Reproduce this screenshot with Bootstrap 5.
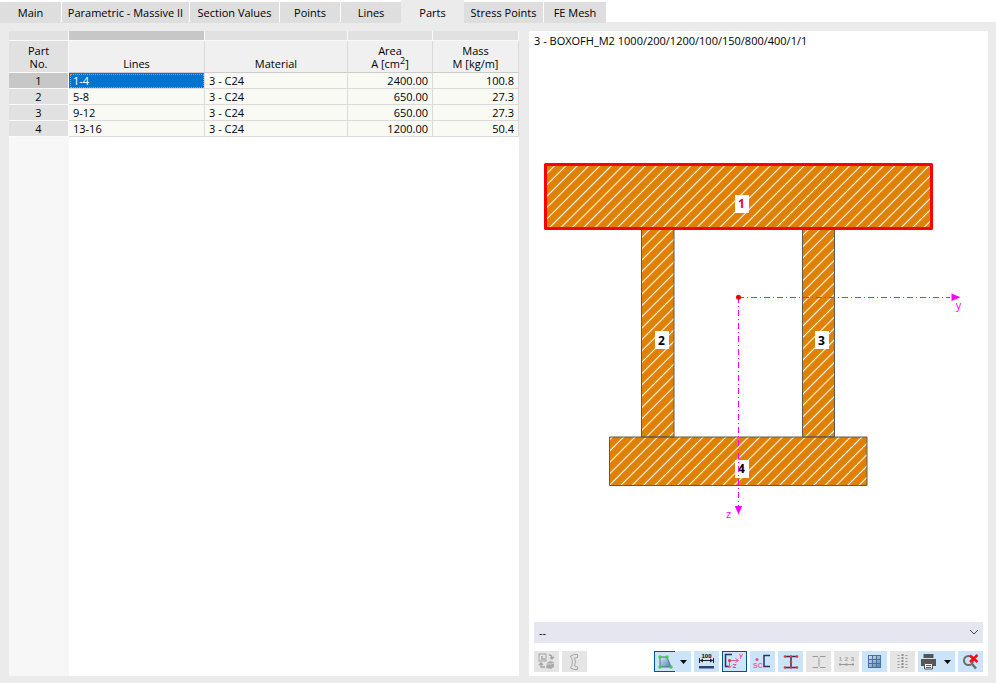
<!DOCTYPE html>
<html lang="en">
<head>
<meta charset="utf-8">
<meta name="viewport" content="width=device-width, initial-scale=1">
<title>Section - Parts</title>
<link href="https://cdn.jsdelivr.net/npm/bootstrap@5.3.0/dist/css/bootstrap.min.css" rel="stylesheet">
<style>
body{font-family:"Open Sans","Noto Sans",sans-serif;font-size:11px;line-height:13px;color:#000;background:#ebebeb}
.tab-strip{background:linear-gradient(#fff 22px,#ebebeb 22px);gap:1px;height:31px}
.tab-btn{border:0;background:#dedede;color:#000;height:21px;margin-top:2px;padding:0;font-size:11px;line-height:21px;white-space:nowrap}
.tab-btn.active{background:#ebebeb;height:23px;margin:0 -1px;padding-top:2px}
.tab-main{width:61px}.tab-param{width:127px}.tab-values{width:89px}.tab-short{width:60px}.tab-parts{width:63px}.tab-stress{width:79px}.tab-mesh{width:62px}
.work-area{padding:0 8px 7px 9px;gap:10px}
.parts-pane{flex:1 1 510px;min-width:0;background:linear-gradient(90deg,#f7f7f7 60px,#fff 60px)}
.draw-pane{flex:1 1 459px;min-width:0;padding:3px 5px 4px}
.parts-grid{width:100%;table-layout:fixed;border-collapse:separate;border-spacing:0}
.parts-grid td,.parts-grid th{font-weight:400;border:0 solid #dadada;border-width:0 1px 1px 0;overflow:hidden;white-space:nowrap}
.parts-grid .strip th{height:10px;padding:0;background:#e1e1e1;border-color:#fafafa}
.parts-grid .strip .on{background:#c7c7c7}
.parts-grid .heads th{height:32px;padding:0 4px 2px;vertical-align:bottom;text-align:center;background:#f0f0f0;border-bottom-color:#ccc}
.parts-grid tbody td{height:16px;padding:0 4px;line-height:15px;background:#fafaf5}
.parts-grid tbody th{height:16px;padding:0;line-height:15px;text-align:center}
.parts-grid tr .rowhead{background:#e1e1e1;border-color:#fafafa}
.parts-grid tr .rowhead.on{background:#c7c7c7}
.parts-grid tbody td.picked{background:#0073d0;color:#fff;outline:1px dotted #ff8a28;outline-offset:-2px}
.parts-grid sup{font-size:9px;line-height:0;top:-4px}
.view-select{appearance:none;border:0;border-radius:0;width:100%;height:21px;padding:0 5px;font-size:11px;color:#000;background:#e6e6f1}
.pick-wrap{position:relative}
.pick-wrap svg{position:absolute;right:4px;top:6px;pointer-events:none}
.tools{gap:3px;margin-top:8px}
.tool{border:0;padding:0;width:25px;height:21px;background:#cce4f7;display:flex;align-items:center;justify-content:center}
.tool.off{background:#e5e5e5}
.tool.down{box-shadow:inset 0 0 0 1px #00529b}
.tool-main{width:21px;box-shadow:inset 1px 1px #00529b,inset 0 -1px #00529b}
.tool-main.plain{box-shadow:none}
.tool-arrow{width:16px}
.tool svg{display:block}
</style>
</head>
<body>
<div class="d-flex flex-column min-vh-100">
  <nav class="tab-strip d-flex align-items-start" role="tablist" aria-label="Section">
    <button class="tab-btn tab-main" role="tab">Main</button>
    <button class="tab-btn tab-param" role="tab">Parametric - Massive II</button>
    <button class="tab-btn tab-values" role="tab">Section Values</button>
    <button class="tab-btn tab-short" role="tab">Points</button>
    <button class="tab-btn tab-short" role="tab">Lines</button>
    <button class="tab-btn tab-parts active" role="tab" aria-selected="true">Parts</button>
    <button class="tab-btn tab-stress" role="tab">Stress Points</button>
    <button class="tab-btn tab-mesh" role="tab">FE Mesh</button>
  </nav>
  <main class="work-area d-flex flex-grow-1">
    <section class="parts-pane">
      <table class="parts-grid">
        <colgroup><col style="width:60px"><col style="width:136px"><col style="width:143px"><col style="width:85px"><col style="width:86px"></colgroup>
        <thead>
          <tr class="strip"><th class="rowhead"></th><th class="on"></th><th></th><th></th><th></th></tr>
          <tr class="heads"><th class="rowhead" scope="col">Part<br>No.</th><th scope="col">Lines</th><th scope="col">Material</th><th scope="col">Area<br>A [cm<sup>2</sup>]</th><th scope="col">Mass<br>M [kg/m]</th></tr>
        </thead>
        <tbody>
          <tr><th class="rowhead on" scope="row">1</th><td class="picked">1-4</td><td>3 - C24</td><td class="text-end">2400.00</td><td class="text-end">100.8</td></tr>
          <tr><th class="rowhead" scope="row">2</th><td>5-8</td><td>3 - C24</td><td class="text-end">650.00</td><td class="text-end">27.3</td></tr>
          <tr><th class="rowhead" scope="row">3</th><td>9-12</td><td>3 - C24</td><td class="text-end">650.00</td><td class="text-end">27.3</td></tr>
          <tr><th class="rowhead" scope="row">4</th><td>13-16</td><td>3 - C24</td><td class="text-end">1200.00</td><td class="text-end">50.4</td></tr>
        </tbody>
      </table>
    </section>
    <section class="draw-pane bg-white d-flex flex-column">
      <div>3 - BOXOFH_M2 1000/200/1200/100/150/800/400/1/1</div>
      <div class="flex-grow-1">
        <svg class="d-block w-100" viewBox="534 47 449 570" role="img" aria-label="Cross-section with four parts">
          <defs>
            <pattern id="hatch" width="8.022" height="8.022" patternUnits="userSpaceOnUse" patternTransform="rotate(45)">
              <rect width="9" height="9" fill="#e08000"/>
              <path d="M4 0V9" stroke="#fff" stroke-width="1.1"/>
            </pattern>
          </defs>
          <g fill="url(#hatch)" stroke="#5a5a55">
            <path d="M641.5 229.5h32.500v207.500h-32.500zM802.500 229.500h32v207.500h-32zM609.500 437h257.500v48.500h-257.500z"/>
            <rect x="545.500" y="164.500" width="386" height="64" stroke="#f00" stroke-width="3" stroke-linejoin="round"/>
          </g>
          <g fill="#fff"><path d="M735 195h14v18h-14zM655 331h14v18h-14zM815 331h14v18h-14zM735 460h14v18h-14z"/></g>
          <g font-size="12" font-weight="700" text-anchor="middle">
            <text x="741.500" y="208" fill="#f00028">1</text>
            <text x="661.500" y="345">2</text>
            <text x="821.500" y="345">3</text>
            <text x="741.500" y="473">4</text>
          </g>
          <g fill="none" stroke="#f0f" stroke-dasharray="6 3 1 3">
            <path d="M738 297.500H950"/><path d="M738.500 297V506"/>
          </g>
          <g fill="#f0f">
            <path d="M951.500 293.500V301L960.500 297.300zM734.800 506h7.400L738.500 514.500z"/>
            <text x="958.500" y="309" font-size="11" text-anchor="middle">y</text>
            <text x="728.500" y="518" font-size="11" text-anchor="middle">z</text>
          </g>
          <circle cx="738.500" cy="297.300" r="2.500" fill="#f00000"/>
        </svg>
      </div>
      <div class="pick-wrap">
        <select class="view-select d-block" aria-label="View"><option>--</option></select>
        <svg width="10" height="8" fill="none" stroke="#444"><path d="M1 2l4 4 4-4"/></svg>
      </div>
      <div class="tools d-flex">
        <button class="tool off" aria-label="Swap view">
          <svg width="17" height="17" fill="none" stroke="#a3a3a3"><rect x="1" y="1" width="7" height="7"/><path d="M3 3h2v2h2v2H3z" fill="#b5b5b5" stroke="none"/><path d="M11 2q3 0 3 3M12 4.500l2 1.500 2-2M3 10v4h4M1 12l2-2 2 2" stroke-width="1.300"/><path d="M9 10l3-2 4 1v5l-3 2-5-1z" fill="#ababab" stroke="none"/><path d="M9 11h4l3-1" stroke="#d5d5d5"/></svg></button>
        <button class="tool off me-auto" aria-label="Channel">
          <svg width="12" height="18" fill="none" stroke="#a8a8a8"><path d="M8.500 1.500H5L1.500 3q4 6 0 12L5 16.500h4M8.500 1.500v3l-3 .5q2 4 0 8l3 1v3"/></svg></button>
        <div class="d-flex">
          <button class="tool tool-main" aria-label="Display shape">
            <svg width="16" height="14"><defs><linearGradient id="blue" x2="1" y2="1"><stop stop-color="#dceaf5"/><stop offset="1" stop-color="#4f7caa"/></linearGradient></defs><path d="M3 2h7l4 10H3z" fill="url(#blue)" stroke="#4b6e94"/><g fill="#3fd23f"><circle cx="3" cy="2" r="1.700"/><circle cx="10" cy="2" r="1.700"/><circle cx="3" cy="12" r="1.700"/><circle cx="14" cy="12" r="1.700"/></g></svg></button>
          <button class="tool tool-arrow" aria-label="Shape options"><svg width="7" height="4"><path d="M0 0h7L3.500 4z"/></svg></button>
        </div>
        <button class="tool" aria-label="Dimensions">
          <svg width="17" height="17"><text x="8.500" y="5" font-size="6" font-weight="700" font-family="Liberation Sans,sans-serif" text-anchor="middle">100</text><path d="M1.500 5v5M15.500 5v5M2 7.500h13" stroke="#222"/><path d="M2 7.500l3-2v4zM15 7.500l-3-2v4z" fill="#222"/><path d="M1 13h15v2.500H1z" fill="#33416f"/></svg></button>
        <button class="tool down" aria-label="Principal axes">
          <svg width="21" height="17" fill="none"><path d="M8 1.500H1.500v12H6" stroke="#2d2d63" stroke-width="1.500"/><path d="M5 7.500h9M5.500 7v8" stroke="#e8559a"/><circle cx="5.500" cy="7.500" r="1.500" fill="#e33"/><path d="M11.500 5.500l3 2-3 2M3.500 12.500l2 2.500 2-2.500" stroke="#e8559a"/><path d="M15.500 1l1.500 3 1.500-3M17 4l-1 2M9 11.500h3l-3 3h3" stroke="#e8559a"/></svg></button>
        <button class="tool" aria-label="Shear center">
          <svg width="19" height="17"><circle cx="4" cy="6.500" r="1.500" fill="#e34b86"/><text x="0" y="15" font-size="7" font-family="Liberation Sans,sans-serif" font-weight="700" fill="#e06aa2">SC</text><path d="M17 2.500h-6v11h6" fill="none" stroke="#2d2d63" stroke-width="1.500"/></svg></button>
        <button class="tool" aria-label="Stress points">
          <svg width="16" height="16"><path d="M2 2.500h12M2 13.500h12M8 2.500v11" fill="none" stroke="#2d2d63" stroke-width="1.500"/><g fill="#f03434"><circle cx="2" cy="2.500" r="1.300"/><circle cx="8" cy="2.500" r="1.300"/><circle cx="14" cy="2.500" r="1.300"/><circle cx="8" cy="8" r="1.300"/><circle cx="2" cy="13.500" r="1.300"/><circle cx="8" cy="13.500" r="1.300"/><circle cx="14" cy="13.500" r="1.300"/></g></svg></button>
        <button class="tool off" aria-label="I-section outline">
          <svg width="16" height="16"><path d="M1.500 2.500H7M9 2.500h5.500M1.500 13.500H7M9 13.500h5.500M8 3.500v9" fill="none" stroke="#999"/></svg></button>
        <button class="tool off" aria-label="Numbering">
          <svg width="17" height="13"><g font-size="6" font-family="Liberation Sans,sans-serif" font-weight="700" fill="#a0a0a0" text-anchor="middle"><text x="2.500" y="6">1</text><text x="8.500" y="6">2</text><text x="14.500" y="6">3</text></g><path d="M2 9.500h13" stroke="#999"/><path d="M1 8.500h2v2H1zM7.500 8.500h2v2h-2zM14 8.500h2v2h-2z" fill="#999"/></svg></button>
        <button class="tool" aria-label="Grid">
          <svg width="13" height="13"><path d="M0 0h13v13H0z" fill="url(#blue)"/><path d="M.5 0v13M4.500 0v13M8.500 0v13M12.500 0v13M0 .5h13M0 4.500h13M0 8.500h13M0 12.500h13" stroke="#4a6f9c"/></svg></button>
        <button class="tool off" aria-label="Table values">
          <svg width="11" height="16" fill="none" stroke="#999"><path d="M1.500 1v15M9.500 1v15" stroke-width="2" stroke-dasharray="1 2"/><path d="M5.500 0v15" stroke="#8c8c8c" stroke-width="2" stroke-dasharray="2 1"/></svg></button>
        <div class="d-flex">
          <button class="tool tool-main plain" aria-label="Print">
            <svg width="17" height="17"><path d="M3.500 1h10v4h-10z" fill="#555"/><path d="M1 6h15v7h-3v-3H4v3H1z" fill="#555"/><path d="M4.500 10.500h8v5.500h-8z" fill="#fff" stroke="#555"/><path d="M6 12.500h5M6 14.500h5" stroke="#555"/></svg></button>
          <button class="tool tool-arrow" aria-label="Print options"><svg width="7" height="4"><path d="M0 0h7L3.500 4z"/></svg></button>
        </div>
        <button class="tool" aria-label="Reset zoom">
          <svg width="17" height="17" fill="none"><circle cx="6.500" cy="7.500" r="4.500" stroke="#6b6b6b" stroke-width="2"/><path d="M10 11l4 4.500" stroke="#6b6b6b" stroke-width="2.500"/><path d="M8 2.500l7.500 6.500M15.500 2L8 9" stroke="#ee1111" stroke-width="2.500"/></svg></button>
      </div>
    </section>
  </main>
</div>
<script src="https://cdn.jsdelivr.net/npm/bootstrap@5.3.0/dist/js/bootstrap.bundle.min.js"></script>
</body>
</html>
